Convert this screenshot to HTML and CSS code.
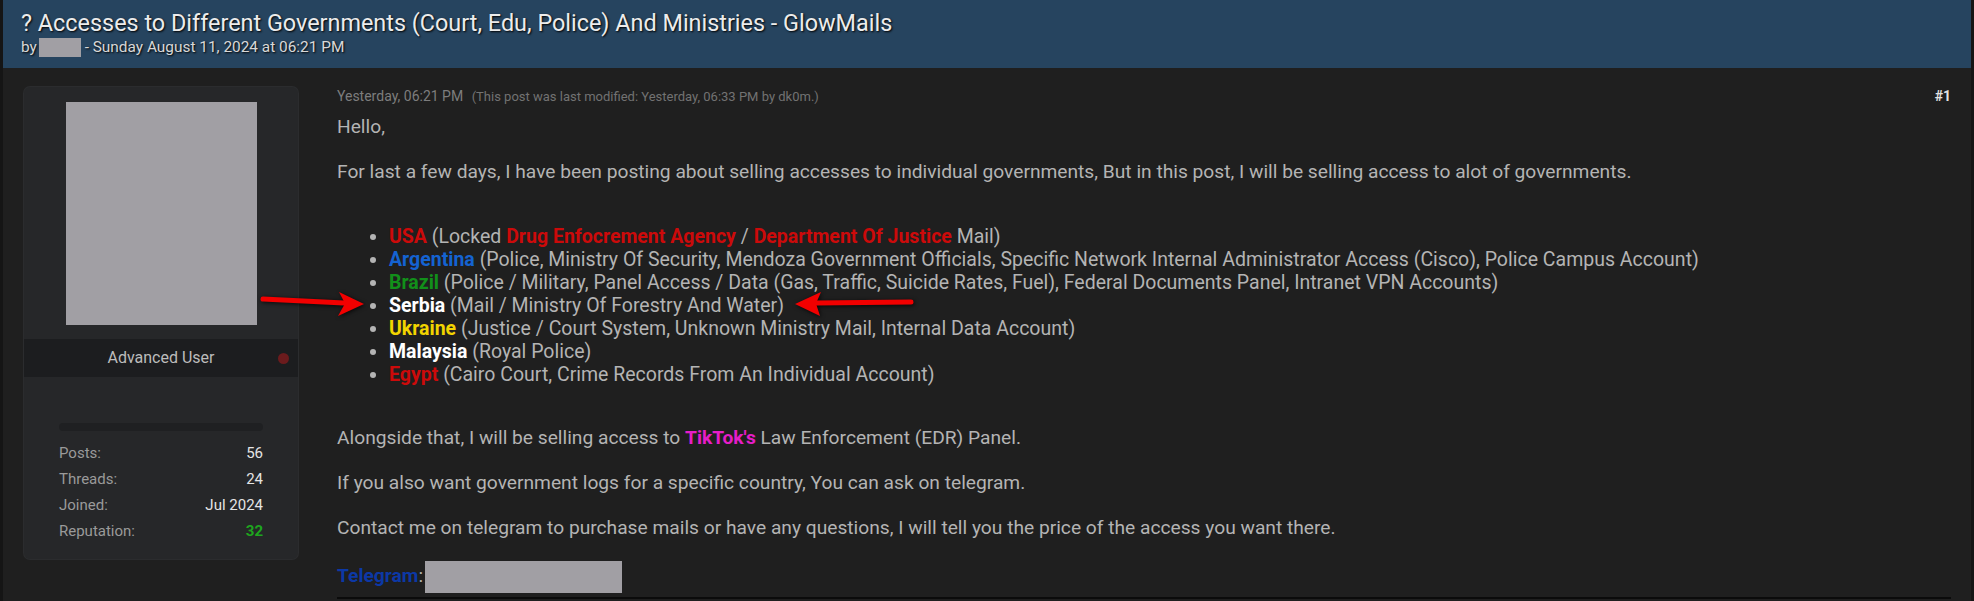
FILE: index.html
```html
<!DOCTYPE html>
<html>
<head>
<meta charset="UTF-8">
<title>Accesses to Different Governments - GlowMails</title>
<link rel="stylesheet" href="styles.css">
</head>
<body>
<div class="page">
  <div class="thread-head">
    <h1 class="thread-title">? Accesses to Different Governments (Court, Edu, Police) And Ministries - GlowMails</h1>
    <div class="thread-by">by<span class="redact small"></span> - Sunday August 11, 2024 at 06:21 PM</div>
  </div>

  <div class="post">
    <div class="author">
      <div class="avatar"></div>
      <div class="rank">Advanced User<span class="offline"></span></div>
      <div class="progress"></div>
      <div class="stat"><span>Posts:</span><b>56</b></div>
      <div class="stat"><span>Threads:</span><b>24</b></div>
      <div class="stat"><span>Joined:</span><b>Jul 2024</b></div>
      <div class="stat"><span>Reputation:</span><b class="rep">32</b></div>
    </div>

    <div class="post-main">
      <div class="post-meta">
        <span class="post-num">#1</span>
        <span class="post-date">Yesterday, 06:21 PM</span>
        <span class="post-edit">(This post was last modified: Yesterday, 06:33 PM by dk0m.)</span>
      </div>
      <div class="post-body">
        <p>Hello,</p>
        <p>For last a few days, I have been posting about selling accesses to individual governments, But in this post, I will be selling access to alot of governments.</p>
        <ul class="countries">
          <li><b class="red">USA</b> (Locked <b class="red">Drug Enfocrement Agency</b> / <b class="red">Department Of Justice</b> Mail)</li>
          <li><b class="blue">Argentina</b> (Police, Ministry Of Security, Mendoza Government Officials, Specific Network Internal Administrator Access (Cisco), Police Campus Account)</li>
          <li><b class="green">Brazil</b> (Police / Military, Panel Access / Data (Gas, Traffic, Suicide Rates, Fuel), Federal Documents Panel, Intranet VPN Accounts)</li>
          <li><b class="white">Serbia</b> (Mail / Ministry Of Forestry And Water)</li>
          <li><b class="yellow">Ukraine</b> (Justice / Court System, Unknown Ministry Mail, Internal Data Account)</li>
          <li><b class="white">Malaysia</b> (Royal Police)</li>
          <li><b class="red">Egypt</b> (Cairo Court, Crime Records From An Individual Account)</li>
        </ul>
        <p>Alongside that, I will be selling access to <b class="pink">TikTok's</b> Law Enforcement (EDR) Panel.</p>
        <p>If you also want government logs for a specific country, You can ask on telegram.</p>
        <p>Contact me on telegram to purchase mails or have any questions, I will tell you the price of the access you want there.</p>
        <p class="tg-line"><b class="tg">Telegram</b>:<span class="redact big"></span></p>
      </div>
      <div class="sig-line"></div>
    </div>
  </div>

  <!-- the two red arrows drawn over the list -->
  <svg class="arrow arrow-left" viewBox="258 288 110 32" width="110" height="32">
    <path d="M263 299 L344 303" stroke="#f20000" stroke-width="5" stroke-linecap="round"/>
    <path d="M364 304 L339 292 L345 303.5 L338 316 Z" fill="#f20000"/>
  </svg>
  <svg class="arrow arrow-right" viewBox="790 288 128 32" width="128" height="32">
    <path d="M816 303 L911 302" stroke="#f20000" stroke-width="5" stroke-linecap="round"/>
    <path d="M795 304 L821 292 L816 303.5 L820 316 Z" fill="#f20000"/>
  </svg>
</div>
</body>
</html>
```

FILE: styles.css
```css
body {
  margin: 0;
  background: #1f1f1f;
  font-family: Roboto, "Liberation Sans", sans-serif;
}

.page {
  position: relative;
  min-height: 601px;
  border-left: 3px solid #151515;
  border-right: 3px solid #151515;
}

.thread-head {
  background: #26445f;
  height: 68px;
  padding: 10px 18px 0;
  box-sizing: border-box;
}
.thread-title {
  margin: 0;
  font-size: 23.4px;
  font-weight: normal;
  line-height: 27px;
  color: #ececec;
  text-shadow: 1px 1px 2px #000;
}
.thread-by {
  margin-top: 1px;
  font-size: 15.4px;
  line-height: 18px;
  color: #d8d8d8;
  text-shadow: 1px 1px 2px #000;
}

.redact {
  display: inline-block;
  background: #a19fa4;
}
.redact.small {
  width: 42px;
  height: 19px;
  margin-left: 2px;
  vertical-align: -5px;
}
.redact.big {
  width: 197px;
  height: 32px;
  margin-left: 2px;
  vertical-align: -11px;
}

.post {
  display: flex;
  padding: 19px 20px 0 21px;
}

.author {
  width: 274px;
  flex: none;
  box-sizing: border-box;
  height: 472px;
  padding-top: 15px;
  background: #262729;
  border-radius: 6px;
  box-shadow: 0 0 0 1px #2b2c2e;
}
.avatar {
  width: 191px;
  height: 223px;
  margin: 0 auto 14px;
  background: #a19fa4;
}
.rank {
  position: relative;
  height: 38px;
  line-height: 38px;
  background: #1c1d1f;
  text-align: center;
  font-size: 16px;
  color: #bcbcbc;
}
.offline {
  position: absolute;
  right: 9px;
  top: 14px;
  width: 11px;
  height: 11px;
  border-radius: 50%;
  background: #6b1b1d;
}
.progress {
  height: 8px;
  margin: 46px 35px 9px;
  border-radius: 4px;
  background: #1f2022;
}
.stat {
  display: flex;
  justify-content: space-between;
  margin: 0 35px;
  font-size: 15px;
  line-height: 26px;
  color: #9a9a9a;
}
.stat b {
  font-weight: normal;
  color: #e4e4e4;
}
.stat b.rep {
  font-weight: bold;
  color: #1ea51e;
}

.post-main {
  flex: 1;
  padding-left: 39px;
  padding-top: 1px;
}
.post-meta {
  font-size: 14px;
  line-height: 16px;
  color: #7d7d7d;
}
.post-edit {
  font-size: 13px;
  margin-left: 5px;
  color: #727272;
}
.post-num {
  float: right;
  font-weight: bold;
  color: #e2e2e2;
}

.post-body {
  margin-top: 10px;
  font-size: 19.2px;
  line-height: 23px;
  color: #b4b4b4;
}
.post-body p {
  margin: 0 0 22px;
}
.countries {
  margin: 42px 0 40px;
  padding-left: 52px;
  font-size: 19.5px;
}
.post-body p.tg-line {
  margin: 18px 0 0;
}

.red { color: #cc0a0a; }
.blue { color: #1463d2; }
.green { color: #12901a; }
.white { color: #ffffff; }
.yellow { color: #f2d400; }
.pink { color: #e61dc8; }
.tg { color: #0c38a6; }

.sig-line {
  margin-top: 4px;
  height: 2px;
  background: #0b0b0b;
}

.arrow {
  position: absolute;
  filter: drop-shadow(1px 1px 2px rgba(0, 0, 0, 0.8));
}
.arrow-left {
  left: 255px;
  top: 288px;
}
.arrow-right {
  left: 787px;
  top: 288px;
}
```
